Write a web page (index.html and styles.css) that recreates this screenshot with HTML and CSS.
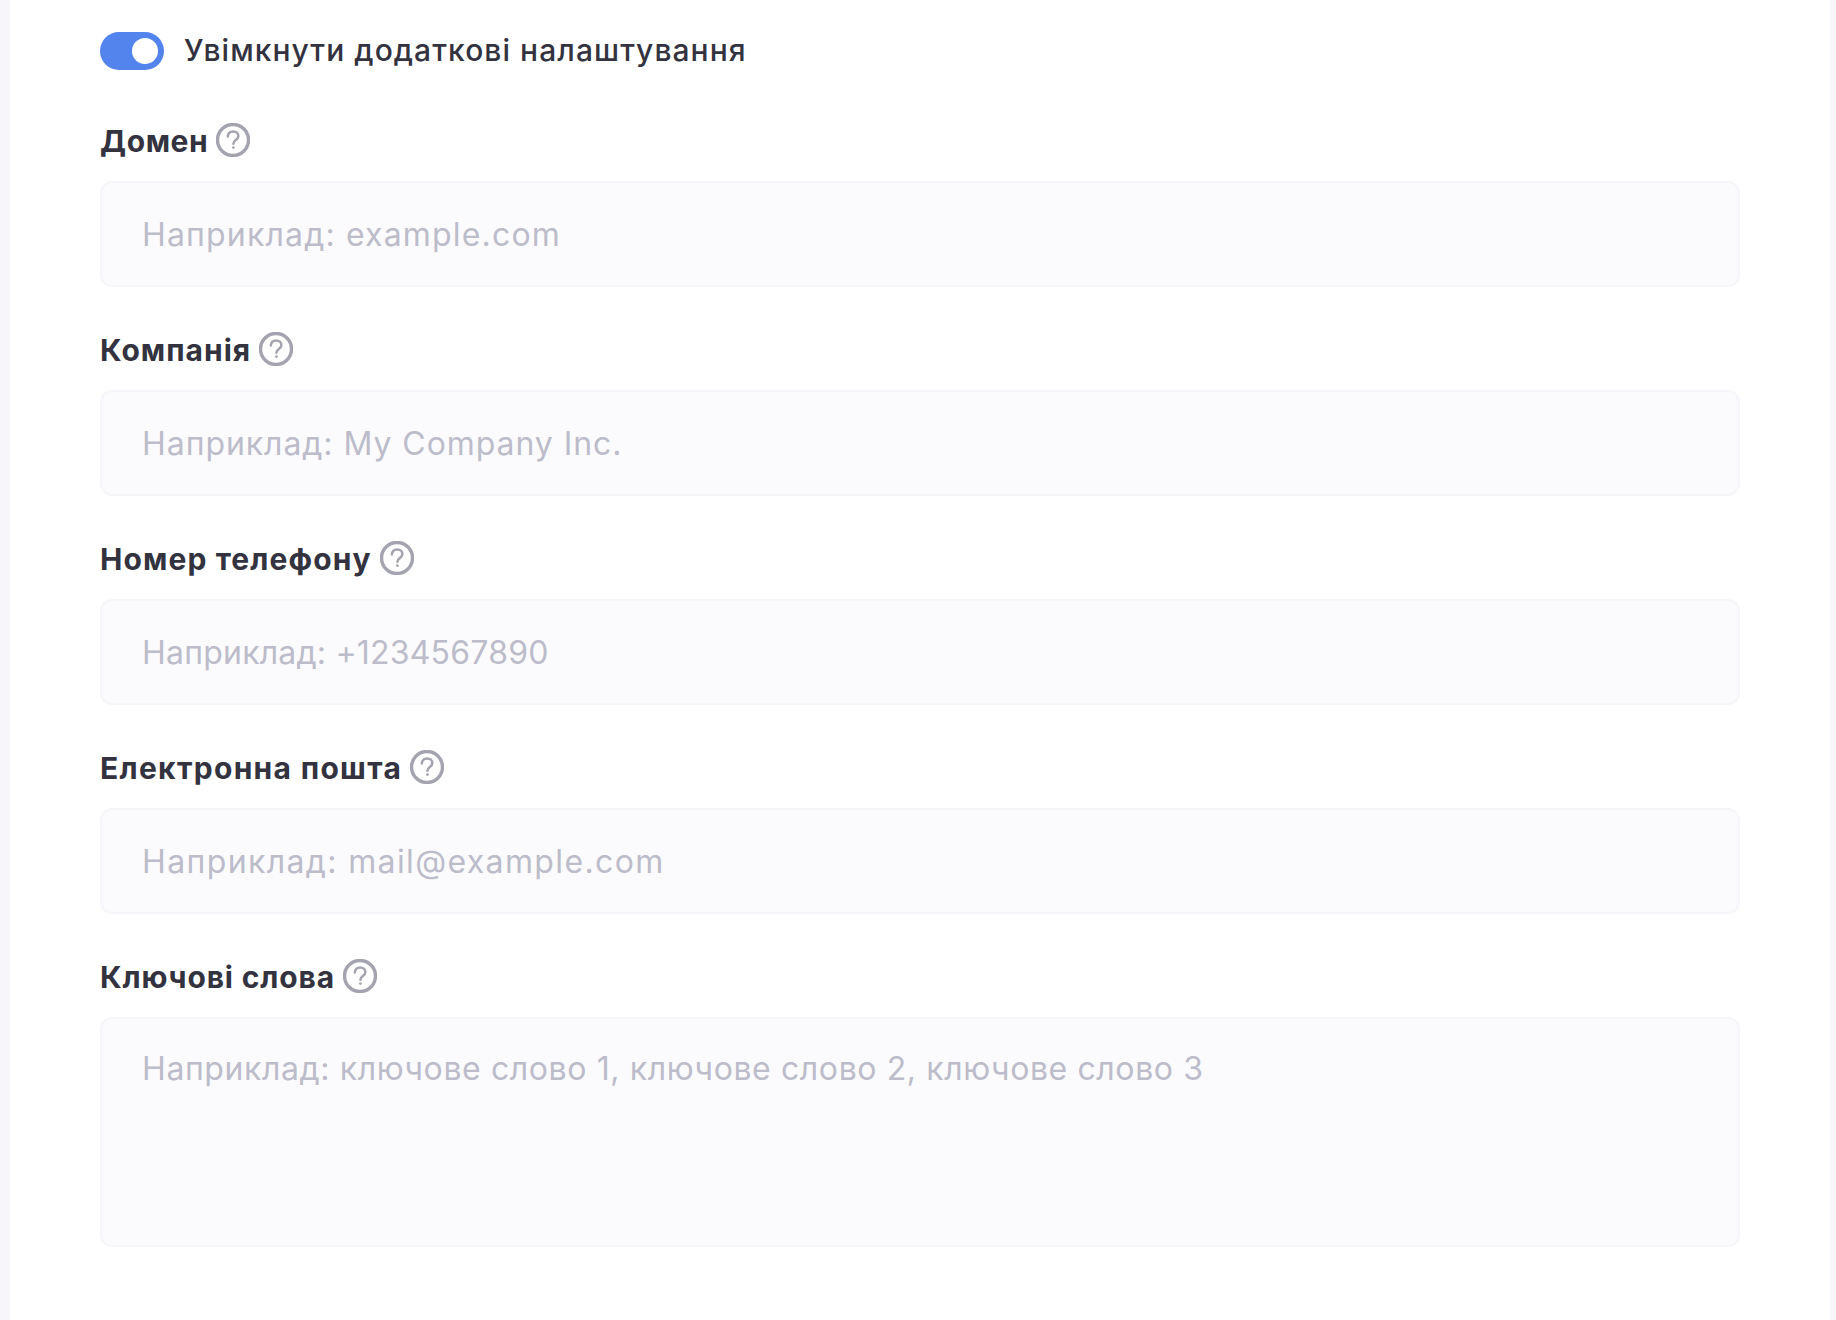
FILE: index.html
```html
<!DOCTYPE html>
<html lang="uk">
<head>
<meta charset="utf-8">
<title>Додаткові налаштування</title>
<link rel="stylesheet" href="styles.css">
</head>
<body>
<main class="panel">
  <div class="switch-row">
    <span class="switch"><span class="knob"></span></span>
    <span class="switch-label">Увімкнути додаткові налаштування</span>
  </div>
  <div class="field">
    <div class="label-row"><span class="label label-domain">Домен</span>
      <svg class="help" viewBox="0 0 34 34"><circle cx="17" cy="17" r="15.5"/><path d="M11.800 13.400c.2-3 2.400-5 5.300-5 3 0 5.300 2 5.300 4.700 0 3.900-5 4-5 7.600"/><circle class="dot" cx="17.400" cy="24.600" r="1.400"/></svg></div>
    <div class="input input-domain">Наприклад: example.com</div>
  </div>
  <div class="field">
    <div class="label-row"><span class="label label-company">Компанія</span>
      <svg class="help" viewBox="0 0 34 34"><circle cx="17" cy="17" r="15.5"/><path d="M11.800 13.400c.2-3 2.400-5 5.300-5 3 0 5.300 2 5.300 4.700 0 3.900-5 4-5 7.600"/><circle class="dot" cx="17.400" cy="24.600" r="1.400"/></svg></div>
    <div class="input input-company">Наприклад: My Company Inc.</div>
  </div>
  <div class="field">
    <div class="label-row"><span class="label label-phone">Номер телефону</span>
      <svg class="help" viewBox="0 0 34 34"><circle cx="17" cy="17" r="15.5"/><path d="M11.800 13.400c.2-3 2.400-5 5.300-5 3 0 5.300 2 5.300 4.700 0 3.900-5 4-5 7.600"/><circle class="dot" cx="17.400" cy="24.600" r="1.400"/></svg></div>
    <div class="input input-phone">Наприклад: +1234567890</div>
  </div>
  <div class="field">
    <div class="label-row"><span class="label label-email">Електронна пошта</span>
      <svg class="help" viewBox="0 0 34 34"><circle cx="17" cy="17" r="15.5"/><path d="M11.800 13.400c.2-3 2.400-5 5.300-5 3 0 5.300 2 5.300 4.700 0 3.900-5 4-5 7.600"/><circle class="dot" cx="17.400" cy="24.600" r="1.400"/></svg></div>
    <div class="input input-email">Наприклад: mail@example.com</div>
  </div>
  <div class="field">
    <div class="label-row"><span class="label">Ключові слова</span>
      <svg class="help" viewBox="0 0 34 34"><circle cx="17" cy="17" r="15.5"/><path d="M11.800 13.400c.2-3 2.400-5 5.300-5 3 0 5.300 2 5.300 4.700 0 3.900-5 4-5 7.600"/><circle class="dot" cx="17.400" cy="24.600" r="1.400"/></svg></div>
    <div class="input textarea">Наприклад: ключове слово 1, ключове слово 2, ключове слово 3</div>
  </div>
</main>
</body>
</html>
```
FILE: styles.css
```css
* { box-sizing: border-box; }
html, body { margin: 0; height: 100%; }
body {
  background: #f6f6fb;
  padding: 0 6px 0 10px;
  font-family: Inter, "Noto Sans", sans-serif;
  overflow: hidden;
}
.panel {
  background: #fff;
  height: 1320px;
  padding: 32px 90px 0;
}
.switch-row {
  display: flex;
  align-items: center;
  gap: 20px;
  height: 38px;
}
.switch {
  display: flex;
  align-items: center;
  justify-content: flex-end;
  width: 64px;
  height: 38px;
  padding-right: 6px;
  border-radius: 19px;
  background: #5383ec;
}
.knob {
  width: 26px;
  height: 26px;
  border-radius: 50%;
  background: #fff;
}
.switch-label {
  padding-bottom: 2px;
  font-size: 30px;
  font-weight: 500;
  color: #33333f;
  letter-spacing: 1.06px;
}
.switch-row + .field .label-row { margin-top: 53px; }
.label-row {
  display: flex;
  align-items: center;
  gap: 8px;
  height: 34px;
  margin-top: 45px;
  margin-bottom: 24px;
}
.label {
  padding-top: 2px;
  font-size: 30px;
  font-weight: 700;
  color: #33333f;
  letter-spacing: 0.85px;
}
.label-domain { letter-spacing: 0.6px; }
.label-company { letter-spacing: 1px; }
.label-phone { letter-spacing: 1.1px; }
.label-email { letter-spacing: 1.3px; }
.help { width: 34px; height: 34px; flex: none; }
.help circle, .help path { fill: none; stroke: #a4a4b0; stroke-width: 3.4; }
.help path { stroke-width: 2.5; stroke-linecap: round; }
.help .dot { fill: #a4a4b0; stroke: none; }
.input {
  display: flex;
  align-items: center;
  height: 106px;
  padding: 0 40px;
  background: #fbfbfd;
  border: 2px solid #f5f5fa;
  border-radius: 12px;
  font-size: 32px;
  color: #bcbcca;
  letter-spacing: 0.85px;
}
.input-domain { letter-spacing: 1.17px; }
.input-company { letter-spacing: 0.94px; }
.input-phone { letter-spacing: 0.21px; }
.input-email { letter-spacing: 1.37px; }
.textarea {
  align-items: flex-start;
  height: 230px;
  padding-top: 30px;
  letter-spacing: 0.6px;
}
```
